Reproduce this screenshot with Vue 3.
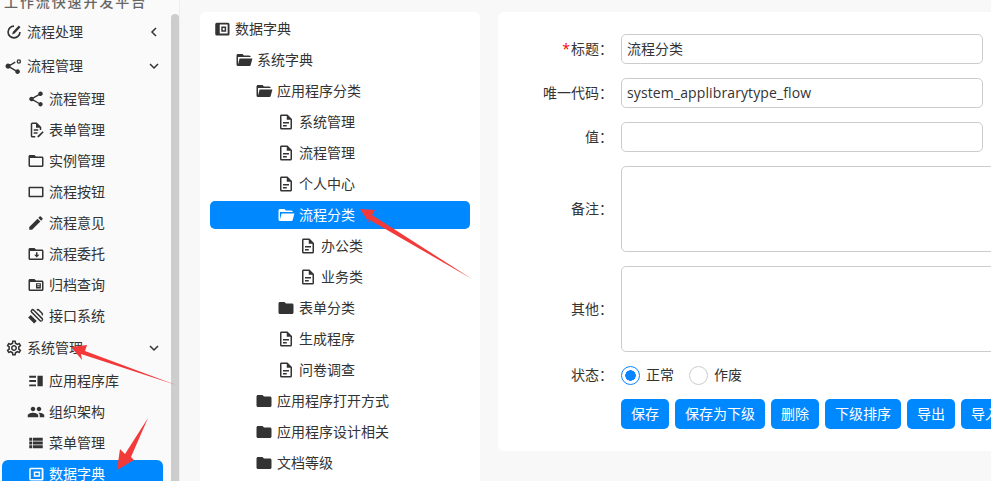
<script setup>
const P = {
  check: 'M12 3a9 9 0 1 0 9 9h-2.200a6.800 6.800 0 1 1-6.800-6.800zM18.400 3.400l2.200 2.200-7.800 8.400-3.400 1.400 1.200-3.600z',
  flow: 'M18.500 3a3 3 0 1 1 0 6 3 3 0 0 1 0-6zm0 1.800a1.200 1.200 0 1 0 0 2.400 1.200 1.200 0 0 0 0-2.400zM13 6l1.200 1.800-6.800 3.900c.1.400.1.800 0 1.200l7.300 4.300a3.100 3.100 0 1 1-1 1.800l-7.300-4.300A3.400 3.400 0 1 1 6 9.200c.5 0 1 .1 1.400.4z',
  share: 'M18 16.080c-.760 0-1.440.300-1.960.770L8.910 12.700c.050-.230.090-.460.090-.700s-.040-.470-.090-.700l7.050-4.110c.540.500 1.250.810 2.040.810 1.660 0 3-1.340 3-3s-1.340-3-3-3-3 1.340-3 3c0 .240.040.470.090.700L8.040 9.810C7.500 9.310 6.790 9 6 9c-1.660 0-3 1.340-3 3s1.340 3 3 3c.790 0 1.500-.310 2.040-.810l7.120 4.160c-.050.210-.080.430-.080.650 0 1.610 1.310 2.920 2.920 2.920 1.610 0 2.920-1.310 2.920-2.920s-1.310-2.920-2.920-2.920z',
  form: 'M13 2H7a2 2 0 0 0-2 2v16a2 2 0 0 0 2 2h4v-2H7V4h5v5h5v3h2V8zM9 11h6v2H9zM9 15h5v2H9zM20.800 13.500l1.500 1.500-6.500 6.500H14V20z',
  folder: 'M20 6h-8l-2-2H4c-1.100 0-1.990.900-1.990 2L2 18c0 1.100.900 2 2 2h16c1.100 0 2-.900 2-2V8c0-1.100-.900-2-2-2zm0 12H4V8h16v10z',
  rect: 'M21 5H3a1 1 0 0 0-1 1v12a1 1 0 0 0 1 1h18a1 1 0 0 0 1-1V6a1 1 0 0 0-1-1zm-1 12H4V7h16z',
  edit: 'M3 17.250V21h3.750L17.810 9.940l-3.750-3.750L3 17.250zM20.710 7.040c.390-.390.390-1.020 0-1.410l-2.340-2.340c-.390-.390-1.020-.390-1.410 0l-1.830 1.830 3.750 3.750 1.830-1.830z',
  fdown: 'M20 6h-8l-2-2H4c-1.100 0-1.990.900-1.990 2L2 18c0 1.100.900 2 2 2h16c1.100 0 2-.900 2-2V8c0-1.100-.900-2-2-2zm0 12H4V8h16v10zM12 9.500h2v3.500h2.500L13 16.500 9.500 13H12z',
  farch: 'M20 6h-8l-2-2H4c-1.100 0-1.990.900-1.990 2L2 18c0 1.100.900 2 2 2h16c1.100 0 2-.900 2-2V8c0-1.100-.900-2-2-2zm0 12H4V8h16v10zM12 9.500h6.500v7H12zm1.500 1.200v1.100h3.500v-1.100zm0 2.300v1.100h3.500V13z',
  link: 'M5.500 3.500a3 3 0 0 1 4.200 0L21 14.800a3 3 0 0 1-4.200 4.200L5.500 7.700a3 3 0 0 1 0-4.200zM7 5a1 1 0 0 0 0 1.400l11.200 11.200a1 1 0 0 0 1.400-1.400L8.400 5a1 1 0 0 0-1.400 0zM12.500 3.500a3 3 0 0 1 4.200 0l4 4a3 3 0 0 1 0 4.200l-1.400-1.400a1 1 0 0 0 0-1.400l-4-4a1 1 0 0 0-1.400 0zM5 10.500l8 8-3.500 3.500-8-8z',
  gear: 'M19.430 12.980c.040-.320.070-.640.070-.980 0-.340-.030-.660-.070-.980l2.110-1.650c.190-.150.240-.420.120-.640l-2-3.460c-.090-.160-.260-.250-.440-.250-.060 0-.120.010-.170.030l-2.490 1c-.520-.400-1.080-.730-1.690-.980l-.380-2.650C14.460 2.180 14.250 2 14 2h-4c-.250 0-.460.180-.490.420l-.380 2.650c-.610.250-1.170.590-1.690.980l-2.490-1c-.060-.020-.120-.030-.180-.030-.170 0-.340.090-.430.250l-2 3.460c-.130.220-.070.490.120.640l2.110 1.650c-.040.320-.070.650-.070.980 0 .330.030.660.070.980l-2.110 1.650c-.190.150-.240.420-.120.640l2 3.460c.090.160.260.250.440.250.060 0 .120-.010.170-.030l2.490-1c.520.400 1.080.730 1.690.980l.380 2.650c.030.240.240.420.490.420h4c.250 0 .460-.180.490-.420l.380-2.650c.610-.250 1.170-.590 1.690-.980l2.490 1c.060.020.120.030.180.030.170 0 .340-.090.430-.250l2-3.460c.120-.220.070-.490-.120-.640l-2.110-1.650zm-1.980-1.710c.040.310.050.520.050.730 0 .210-.020.430-.05.730l-.140 1.130.890.700 1.080.840-.700 1.210-1.270-.510-1.040-.420-.900.680c-.430.320-.840.560-1.250.730l-1.060.430-.160 1.130-.200 1.350h-1.400l-.190-1.350-.160-1.130-1.060-.430c-.430-.180-.830-.410-1.230-.710l-.910-.700-1.060.430-1.270.510-.700-1.210 1.080-.84.890-.700-.140-1.130c-.030-.310-.050-.540-.050-.740s.020-.430.050-.730l.140-1.130-.890-.700-1.080-.84.700-1.210 1.270.510 1.040.420.900-.680c.430-.320.840-.560 1.250-.730l1.060-.430.160-1.130.200-1.350h1.390l.190 1.350.160 1.130 1.060.430c.430.180.830.410 1.230.710l.910.700 1.060-.430 1.270-.510.700 1.210-1.070.85-.89.700.140 1.130zM12 8c-2.210 0-4 1.790-4 4s1.790 4 4 4 4-1.790 4-4-1.790-4-4-4zm0 6c-1.100 0-2-.900-2-2s.900-2 2-2 2 .900 2 2-.900 2-2 2z',
  lib: 'M3 5h9v2.500H3zM3 10.750h9v2.500H3zM3 16.500h9V19H3zM14 5h7v14h-7z',
  people: 'M16 11c1.660 0 2.990-1.340 2.990-3S17.660 5 16 5c-1.660 0-3 1.340-3 3s1.340 3 3 3zm-8 0c1.660 0 2.990-1.340 2.990-3S9.660 5 8 5C6.340 5 5 6.340 5 8s1.340 3 3 3zm0 2c-2.330 0-7 1.170-7 3.500V19h14v-2.500c0-2.330-4.670-3.500-7-3.500zm8 0c-.290 0-.620.020-.970.050 1.160.840 1.970 1.970 1.970 3.450V19h6v-2.500c0-2.330-4.670-3.500-7-3.500z',
  list: 'M3 5h4v4H3zM8 5h13v4H8zM3 10h4v4H3zM8 10h13v4H8zM3 15h4v4H3zM8 15h13v4H8z',
  dict: 'M5 3.500h15a2 2 0 0 1 2 2v13a2 2 0 0 1-2 2H5a2 2 0 0 1-2-2v-13a2 2 0 0 1 2-2zM9 6v12h10.500V6zM11 8.500h6.500v7H11zM13 10.500v3h2.500v-3z',
  dictline: 'M5 3.500h15a2 2 0 0 1 2 2v13a2 2 0 0 1-2 2H5a2 2 0 0 1-2-2v-13a2 2 0 0 1 2-2zM5 5.500v13h14.500v-13zM9 8.500h8.500v7H9zM11 10.500v3h4.500v-3z',
  fsolid: 'M10 4H4c-1.100 0-1.990.900-1.990 2L2 18c0 1.100.900 2 2 2h16c1.100 0 2-.900 2-2V8c0-1.100-.900-2-2-2h-8l-2-2z',
  fopen: 'M19 20H4a2 2 0 0 1-2-2V6c0-1.100.900-2 2-2h6l2 2h7a2 2 0 0 1 2 2H4v10l2.140-8h17.070l-2.280 8.500c-.230.870-1.010 1.500-1.930 1.500z',
  file: 'M14 2H6c-1.100 0-2 .900-2 2v16c0 1.100.900 2 2 2h12c1.100 0 2-.900 2-2V8l-6-6zM6 20V4h7v5h5v11H6zM8 12h8v2H8zM8 16h5v2H8z',
}

const menu = [
  { icon: 'check', text: '流程处理', top: true, arrow: 'left' },
  { icon: 'flow', text: '流程管理', top: true, arrow: 'down' },
  { icon: 'share', text: '流程管理' },
  { icon: 'form', text: '表单管理' },
  { icon: 'folder', text: '实例管理' },
  { icon: 'rect', text: '流程按钮' },
  { icon: 'edit', text: '流程意见' },
  { icon: 'fdown', text: '流程委托' },
  { icon: 'farch', text: '归档查询' },
  { icon: 'link', text: '接口系统' },
  { icon: 'gear', text: '系统管理', top: true, arrow: 'down' },
  { icon: 'lib', text: '应用程序库' },
  { icon: 'people', text: '组织架构' },
  { icon: 'list', text: '菜单管理' },
  { icon: 'dictline', text: '数据字典', active: true },
]

const tree = [
  { icon: 'dict', text: '数据字典', depth: 0 },
  { icon: 'fopen', text: '系统字典', depth: 1 },
  { icon: 'fopen', text: '应用程序分类', depth: 2 },
  { icon: 'file', text: '系统管理', depth: 3 },
  { icon: 'file', text: '流程管理', depth: 3 },
  { icon: 'file', text: '个人中心', depth: 3 },
  { icon: 'fopen', text: '流程分类', depth: 3, active: true },
  { icon: 'file', text: '办公类', depth: 4 },
  { icon: 'file', text: '业务类', depth: 4 },
  { icon: 'fsolid', text: '表单分类', depth: 3 },
  { icon: 'file', text: '生成程序', depth: 3 },
  { icon: 'file', text: '问卷调查', depth: 3 },
  { icon: 'fsolid', text: '应用程序打开方式', depth: 2 },
  { icon: 'fsolid', text: '应用程序设计相关', depth: 2 },
  { icon: 'fsolid', text: '文档等级', depth: 2 },
]

const indents = [3, 25, 45, 67, 89]
const buttons = ['保存', '保存为下级', '删除', '下级排序', '导出', '导入']
const arrows = [
  '71,347 87,345 85,351 176,385 81,354 82,360',
  '117,470 120,449 125,454 148,418 131,457 134,460',
  '360,209 375,210 372,215 472,279 368,219 370,224',
]
</script>

<template>
  <div class="page">
    <aside class="side">
      <div class="menu">
        <div class="brand">工作流快速开发平台</div>
        <div
          v-for="m in menu"
          :key="m.icon + m.text"
          class="mrow"
          :class="{ top: m.top, sub: !m.top, on: m.active }"
        >
          <svg class="mi" viewBox="0 0 24 24"><path :d="P[m.icon]" fill="currentColor" fill-rule="evenodd" /></svg>
          <span class="mt">{{ m.text }}</span>
          <svg v-if="m.arrow" class="chev" viewBox="0 0 12 12">
            <path :d="m.arrow === 'left' ? 'M8 2 L4 6 L8 10' : 'M2 4 L6 8 L10 4'" fill="none" stroke="currentColor" stroke-width="1.500" />
          </svg>
        </div>
      </div>
      <div class="bar"></div>
    </aside>

    <section class="treebox">
      <div
        v-for="t in tree"
        :key="t.text + t.depth"
        class="trow"
        :class="{ on: t.active }"
        :style="{ paddingLeft: indents[t.depth] + 'px' }"
      >
        <svg class="ti" viewBox="0 0 24 24"><path :d="P[t.icon]" fill="currentColor" fill-rule="evenodd" /></svg>
        <span>{{ t.text }}</span>
      </div>
    </section>

    <section class="formbox">
      <div class="frow">
        <label class="lab"><i class="req">*</i>标题：</label>
        <div class="inp">流程分类</div>
      </div>
      <div class="frow">
        <label class="lab">唯一代码：</label>
        <div class="inp code">system_applibrarytype_flow</div>
      </div>
      <div class="frow">
        <label class="lab">值：</label>
        <div class="inp"></div>
      </div>
      <div class="frow">
        <label class="lab">备注：</label>
        <div class="area"></div>
      </div>
      <div class="frow">
        <label class="lab">其他：</label>
        <div class="area"></div>
      </div>
      <div class="frow radios">
        <label class="lab">状态：</label>
        <span class="radio sel"></span><span class="rt">正常</span>
        <span class="radio"></span><span class="rt">作废</span>
      </div>
      <div class="btns">
        <button v-for="b in buttons" :key="b" class="btn">{{ b }}</button>
      </div>
    </section>

    <svg class="marks" viewBox="0 0 991 481" width="991" height="481">
      <polygon v-for="a in arrows" :key="a" :points="a" fill="#f33a3a" />
    </svg>
  </div>
</template>

<style scoped>
.page {
  position: relative;
  display: flex;
  align-items: flex-start;
  width: 991px;
  height: 481px;
  overflow: hidden;
  background: #f8f8f8;
  color: #333;
  font: 14px/20px "Open Sans", "Noto Sans CJK SC", sans-serif;
}
.side {
  display: flex;
  flex: none;
  width: 179px;
  height: 481px;
  margin-right: 20px;
  background: #fafafa;
  border-right: 1px solid #efefef;
}
.menu {
  width: 171px;
  flex: none;
}
.bar {
  width: 8px;
  height: 500px;
  margin-top: 14px;
  background: #cdcdcd;
  border-radius: 4px 4px 0 0;
}
.brand {
  height: 23px;
  margin-top: -8px;
  padding-left: 4px;
  color: #666;
  font-weight: 500;
  letter-spacing: 1.900px;
  white-space: nowrap;
}
.mrow {
  display: flex;
  align-items: center;
  gap: 4px;
}
.top {
  height: 34px;
  padding-left: 5px;
}
.sub {
  height: 31px;
  padding-left: 27px;
}
.mi {
  width: 18px;
  height: 18px;
  flex: none;
}
.mt {
  flex: 1;
}
.chev {
  width: 12px;
  height: 12px;
  margin-right: 11px;
}
.on.sub {
  height: 28px;
  margin: 2px 8px 0 2px;
  padding-left: 25px;
  border-radius: 6px;
  background: #0088ff;
  color: #fff;
}
.treebox {
  flex: none;
  width: 260px;
  height: 481px;
  margin-top: 12px;
  padding: 3px 10px;
  background: #fff;
  border-radius: 6px 6px 0 0;
}
.trow {
  display: flex;
  align-items: center;
  gap: 4px;
  height: 28px;
  margin-bottom: 3px;
  border-radius: 5px;
  white-space: nowrap;
}
.trow.on {
  background: #0088ff;
  color: #fff;
}
.ti {
  width: 18px;
  height: 18px;
  flex: none;
}
.formbox {
  flex: none;
  width: 600px;
  margin: 12px 0 0 18px;
  padding: 22px 0;
  background: #fff;
  border-radius: 6px;
}
.frow {
  display: flex;
  align-items: center;
  margin-bottom: 14px;
}
.lab {
  flex: none;
  width: 115px;
  margin-right: 8px;
  text-align: right;
}
.req {
  color: #f00;
  font-style: normal;
  margin-right: 1px;
}
.inp {
  box-sizing: border-box;
  width: 362px;
  height: 30px;
  padding: 0 5px;
  line-height: 28px;
  border: 1px solid #ccc;
  border-radius: 5px;
}
.code {
  letter-spacing: .12px;
}
.area {
  box-sizing: border-box;
  width: 460px;
  height: 86px;
  border: 1px solid #ccc;
  border-radius: 5px;
}
.radios {
  height: 19px;
}
.radios .lab,
.radios .rt {
  position: relative;
  top: -1px;
}
.radio {
  box-sizing: border-box;
  flex: none;
  width: 19px;
  height: 19px;
  border: 1px solid #ccc;
  border-radius: 50%;
  background: #fff;
}
.radio.sel {
  border-color: #0a84ff;
  background: radial-gradient(circle, #0a84ff 0 5px, #fff 5.500px);
}
.rt {
  margin: 0 15px 0 6px;
}
.btns {
  display: flex;
  gap: 6px;
  padding-left: 123px;
}
.btn {
  height: 30px;
  padding: 0 10px;
  border: 0;
  border-radius: 5px;
  background: #0088ff;
  color: #fff;
  font: inherit;
  white-space: nowrap;
}
.marks {
  position: absolute;
  top: 0;
  left: 0;
  pointer-events: none;
}
</style>
